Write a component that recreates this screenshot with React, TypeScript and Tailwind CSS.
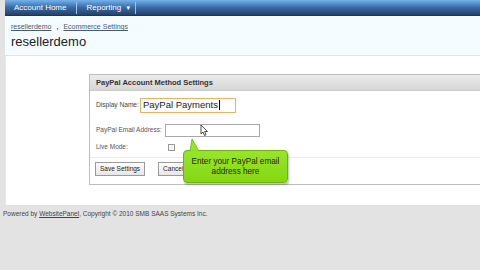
import React from "react";

export default function App() {
  return (
    <div className="relative w-[480px] h-[270px] overflow-hidden bg-[#e3e3e3] text-[#333]" style={{ fontFamily: "Tahoma, 'Liberation Sans', 'DejaVu Sans', sans-serif" }}>
      <div className="ml-[5px] flex flex-col">
        {/* nav bar */}
        <div className="h-[16px] flex items-center bg-gradient-to-b from-[#72b3ec] via-[#3a6aa6] to-[#23416b] border-b border-[#1e3655]">
          <div className="px-[9px] text-[8px] text-white leading-none whitespace-nowrap">Account Home</div>
          <div className="w-px h-[12px] bg-[#9cc3ea] mx-[1px]" />
          <div className="pl-[8px] pr-[4px] text-[8px] text-white leading-none flex items-center gap-[4px] whitespace-nowrap">
            Reporting <span className="text-[6px]">▼</span>
          </div>
          <div className="w-px h-[12px] bg-[#9cc3ea]" />
        </div>
        {/* header band */}
        <div className="h-[40px] bg-[#f5fcff] border-b border-[#dfe4e8] flex flex-col pl-[6px] pt-[6px]">
          <div className="text-[7px] text-[#4a5a6a] leading-[10px] flex items-center gap-[5px] whitespace-nowrap">
            <span className="underline">resellerdemo</span>
            <span className="font-bold">,</span>
            <span className="underline">Ecommerce Settings</span>
          </div>
          <div className="text-[13px] text-[#222] leading-[15px] mt-[2px]" style={{ fontFamily: "'Liberation Sans', Arial, sans-serif" }}>resellerdemo</div>
        </div>
        {/* white content */}
        <div className="h-[149px] bg-white border-l border-[#e8e8e8] pt-[18px] pl-[83px]">
          <div className="w-[420px] h-[111px] border border-[#bdbdbd] bg-white flex flex-col">
            <div className="h-[16px] bg-gradient-to-b from-[#ececec] to-[#d6d6d6] border-b border-[#c8c8c8] flex items-center pl-[6px]">
              <span className="text-[7.5px] font-bold text-[#333] whitespace-nowrap">PayPal Account Method Settings</span>
            </div>
            <div className="flex flex-col pl-[6px] pt-[6px]">
              <div className="flex items-center h-[16px]">
                <span className="text-[6.6px] text-[#444] w-[44px] shrink-0 whitespace-nowrap">Display Name:</span>
                <div className="w-[96px] h-[15px] border border-[#e0b860] bg-white flex items-center pl-[2px] text-[9.5px] text-[#222] whitespace-nowrap" style={{ fontFamily: "'Liberation Sans', Arial, sans-serif" }}>
                  PayPal Payments<span className="w-px h-[10px] bg-black ml-[1px]" />
                </div>
              </div>
              <div className="flex items-center h-[14px] mt-[10px]">
                <span className="text-[6.5px] text-[#555] w-[69px] shrink-0 whitespace-nowrap">PayPal Email Address:</span>
                <div className="w-[95px] h-[13px] border border-[#a8a8a8] bg-white" />
              </div>
              <div className="flex items-center h-[12px] mt-[4px]">
                <span className="text-[6.5px] text-[#555] w-[72px] shrink-0 whitespace-nowrap">Live Mode:</span>
                <div className="w-[7px] h-[7px] border border-[#999] bg-[#f4f4f4]" />
              </div>
            </div>
            <div className="h-px bg-[#ececec] mt-[4px]" />
            <div className="flex items-center gap-[13px] pl-[5px] mt-[4px]">
              <div className="h-[14px] px-[4px] border border-[#9a9a9a] bg-gradient-to-b from-white to-[#e6e6e6] flex items-center text-[6.5px] text-[#222] whitespace-nowrap">Save Settings</div>
              <div className="h-[14px] px-[4px] border border-[#9a9a9a] bg-gradient-to-b from-white to-[#e6e6e6] flex items-center text-[6.5px] text-[#222] whitespace-nowrap">Cancel</div>
            </div>
          </div>
        </div>
        {/* footer */}
        <div className="pt-[4px] text-[6.5px] text-[#444] -ml-[2px] whitespace-nowrap">
          Powered by <span className="underline">WebsitePanel</span>, Copyright © 2010 SMB SAAS Systems Inc.
        </div>
      </div>

      {/* callout */}
      <div className="absolute left-[183px] top-[150px] w-[105px] h-[33px] rounded-[4px] bg-gradient-to-b from-[#96e52c] to-[#84d80c] border border-[#6cb30a] shadow-[1px_2px_2px_rgba(0,0,0,0.25)] flex flex-col items-center justify-center text-[8.2px] leading-[10px] text-[#1f2a0c]" style={{ fontFamily: "'Liberation Sans', Arial, sans-serif" }}>
        <span className="whitespace-nowrap">Enter your PayPal email</span>
        <span className="whitespace-nowrap">address here</span>
      </div>
      <svg className="absolute left-[188px] top-[139px]" width="14" height="13" viewBox="0 0 14 13">
        <path d="M4 0 L2 12 L11 12 Z" fill="#96e52c" stroke="#6cb30a" strokeWidth="0.8" />
        <path d="M2.6 11.4 L10.5 11.4 L10.5 13 L2.6 13 Z" fill="#96e52c" />
      </svg>
      {/* cursor */}
      <svg className="absolute left-[200px] top-[124px]" width="9" height="13" viewBox="0 0 9 13">
        <path d="M1 1 L1 10 L3 8 L4.5 11.5 L6 10.8 L4.6 7.5 L7.5 7.5 Z" fill="white" stroke="#222" strokeWidth="0.8" />
      </svg>
    </div>
  );
}
